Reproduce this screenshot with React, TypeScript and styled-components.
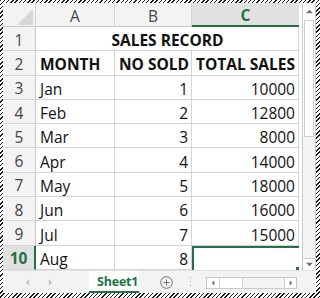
import styled, { createGlobalStyle, css } from 'styled-components';

const GlobalStyle = createGlobalStyle`
	html, body {
		margin: 0;
		padding: 0;
		background: #ffffff;
	}
	* {
		box-sizing: border-box;
	}
`;

const GREEN = '#217346';
const FONT = `'Open Sans', 'Liberation Sans', sans-serif`;

const Frame = styled.div`
	width: 320px;
	height: 298px;
	padding: 3px 4px 5px 3px;
	background: repeating-linear-gradient(135deg, #1a1a1a 0 1px, #ffffff 1px 3px);
	overflow: hidden;
`;

const Window = styled.div`
	width: 313px;
	height: 290px;
	background: #ffffff;
	display: flex;
	flex-direction: column;
	font-family: ${FONT};
`;

const Main = styled.div`
	display: flex;
	height: 267px;
	gap: 3px;
`;

const Sheet = styled.div`
	width: 296px;
	display: grid;
	grid-template-columns: 33px 79px 77px 107px;
	grid-template-rows: 24px repeat(10, 24.3px);
	overflow: hidden;
`;

const Corner = styled.div`
	background: #f3f3f3;
	border-right: 1px solid #d4d4d4;
	border-bottom: 1px solid #c8c8c8;
	svg {
		display: block;
	}
`;

const ColHead = styled.div<{ $active?: boolean }>`
	display: flex;
	align-items: center;
	justify-content: center;
	padding-top: 2px;
	font-size: 15.5px;
	color: #444444;
	background: #f3f3f3;
	border-right: 1px solid #d4d4d4;
	border-bottom: 1px solid #c8c8c8;
	${(p) =>
		p.$active &&
		css`
			background: #e1e1e1;
			color: ${GREEN};
			font-weight: 700;
			border-bottom: 2px solid ${GREEN};
			border-right: none;
		`}
`;

const RowHead = styled.div<{ $active?: boolean }>`
	display: flex;
	align-items: center;
	justify-content: center;
	padding-top: 2px;
	font-size: 15.5px;
	color: #444444;
	background: #f3f3f3;
	border-right: 1px solid #c8c8c8;
	border-bottom: 1px solid #d4d4d4;
	${(p) =>
		p.$active &&
		css`
			background: #e1e1e1;
			color: ${GREEN};
			font-weight: 700;
			border-right: 2px solid ${GREEN};
		`}
`;

const Cell = styled.div<{ $align?: 'left' | 'right' | 'center'; $bold?: boolean; $span?: number; $selected?: boolean }>`
	position: relative;
	display: flex;
	align-items: center;
	justify-content: ${(p) => (p.$align === 'right' ? 'flex-end' : p.$align === 'center' ? 'center' : 'flex-start')};
	padding: 3px 3px 0 4px;
	font-size: 15.5px;
	font-weight: ${(p) => (p.$bold ? 700 : 400)};
	color: #111111;
	white-space: nowrap;
	border-right: 1px solid #d4d4d4;
	border-bottom: 1px solid #d4d4d4;
	grid-column: span ${(p) => p.$span ?? 1};
	${(p) =>
		p.$selected &&
		css`
			box-shadow: inset 2px 2px 0 ${GREEN};
			border-right: none;
			border-bottom: none;
		`}
`;

const FillHandle = styled.span`
	position: absolute;
	right: 0;
	bottom: 0;
	width: 3px;
	height: 3px;
	background: ${GREEN};
`;

const VScroll = styled.div`
	width: 14px;
	display: flex;
	flex-direction: column;
	border-left: 1px solid #c9c9c9;
	border-right: 1px solid #c9c9c9;
	background: #ffffff;
`;

const ScrollBtn = styled.div<{ $h: number; $bottom?: boolean }>`
	display: flex;
	align-items: center;
	justify-content: center;
	flex: 0 0 auto;
	height: ${(p) => p.$h}px;
	background: #ffffff;
	border-top: ${(p) => (p.$bottom ? '1px solid #cfcfcf' : 'none')};
	svg {
		display: block;
	}
`;

const VThumb = styled.div`
	height: 117px;
	margin: 0 1px;
	border: 1px solid #cfcfcf;
	background: #ffffff;
`;

const VTrack = styled.div`
	flex: 1;
	background: #f5f5f5;
`;

const BottomBar = styled.div`
	height: 23px;
	display: flex;
	align-items: stretch;
	background: #f3f3f3;
	border-top: 1px solid #e2e2e2;
`;

const NavArrows = styled.div`
	width: 86px;
	display: flex;
	align-items: center;
	padding-left: 22px;
	gap: 18px;
`;

const Tab = styled.div`
	width: 50px;
	display: flex;
	align-items: center;
	padding-left: 8px;
	background: #ffffff;
	border-bottom: 2px solid ${GREEN};
	font-size: 12.5px;
	font-weight: 700;
	letter-spacing: -0.2px;
	color: ${GREEN};
	white-space: nowrap;
`;

const AddSheet = styled.div`
	width: 45px;
	display: flex;
	align-items: center;
	padding-left: 21px;
	svg {
		display: block;
	}
`;

const Dots = styled.div`
	width: 22px;
	display: flex;
	align-items: center;
	padding-left: 6px;
	svg {
		display: block;
	}
`;

const HScroll = styled.div`
	width: 91px;
	height: 12px;
	align-self: center;
	margin-top: 1px;
	display: flex;
	border: 1px solid #c9c9c9;
	background: #f5f5f5;
`;

const HButton = styled.div<{ $end?: boolean }>`
	width: 12px;
	display: flex;
	align-items: center;
	justify-content: center;
	background: #ffffff;
	border-left: ${(p) => (p.$end ? '1px solid #cfcfcf' : 'none')};
	svg {
		display: block;
	}
`;

const HThumb = styled.div`
	width: 24px;
	background: #ffffff;
	border-left: 1px solid #cfcfcf;
	border-right: 1px solid #cfcfcf;
`;

const HTrack = styled.div`
	flex: 1;
`;

const rows: [string, string, string][] = [
	['Jan', '1', '10000'],
	['Feb', '2', '12800'],
	['Mar', '3', '8000'],
	['Apr', '4', '14000'],
	['May', '5', '18000'],
	['Jun', '6', '16000'],
	['Jul', '7', '15000'],
	['Aug', '8', ''],
];

const Tri = ({ dir, color, size = 6 }: { dir: 'up' | 'down' | 'left' | 'right'; color: string; size?: number }) => {
	const pts = {
		up: '0,5 4,1 8,5',
		down: '0,1 4,5 8,1',
		left: '5,0 1,4 5,8',
		right: '1,0 5,4 1,8',
	}[dir];
	const vertical = dir === 'up' || dir === 'down';
	return (
		<svg width={vertical ? size + 2 : size} height={vertical ? size : size + 2} viewBox={vertical ? '0 0 8 6' : '0 0 6 8'}>
			<polygon points={pts} fill={color} />
		</svg>
	);
};

const App = () => {
	return (
		<>
			<GlobalStyle />
			<Frame>
				<Window>
					<Main>
						<Sheet>
							<Corner>
								<svg width="32" height="23" viewBox="0 0 32 23">
									<polygon points="30,6 30,22 14,22" fill="#d8d8d8" />
								</svg>
							</Corner>
							<ColHead>A</ColHead>
							<ColHead>B</ColHead>
							<ColHead $active>C</ColHead>

							<RowHead>1</RowHead>
							<Cell $span={3} $align="center" $bold>
								SALES RECORD
							</Cell>

							<RowHead>2</RowHead>
							<Cell $bold>MONTH</Cell>
							<Cell $bold>NO SOLD</Cell>
							<Cell $bold>TOTAL SALES</Cell>

							{rows.map(([month, sold, total], i) => {
								const last = i === rows.length - 1;
								return [
									<RowHead key={`h${i}`} $active={last}>
										{i + 3}
									</RowHead>,
									<Cell key={`a${i}`}>{month}</Cell>,
									<Cell key={`b${i}`} $align="right">
										{sold}
									</Cell>,
									<Cell key={`c${i}`} $align="right" $selected={last}>
										{total}
										{last && <FillHandle />}
									</Cell>,
								];
							})}
						</Sheet>
						<VScroll>
							<ScrollBtn $h={17}>
								<Tri dir="up" color="#707070" size={5} />
							</ScrollBtn>
							<VThumb />
							<VTrack />
							<ScrollBtn $h={12} $bottom>
								<Tri dir="down" color="#707070" size={5} />
							</ScrollBtn>
						</VScroll>
					</Main>
					<BottomBar>
						<NavArrows>
							<Tri dir="left" color="#c4c4c4" size={5} />
							<Tri dir="right" color="#c4c4c4" size={5} />
						</NavArrows>
						<Tab>Sheet1</Tab>
						<AddSheet>
							<svg width="13" height="13" viewBox="0 0 13 13">
								<circle cx="6.5" cy="6.5" r="5.8" fill="none" stroke="#6f6f6f" strokeWidth="1" />
								<path d="M6.5 3.5v6M3.5 6.5h6" stroke="#6f6f6f" strokeWidth="1" />
							</svg>
						</AddSheet>
						<Dots>
							<svg width="2" height="10" viewBox="0 0 2 10">
								<rect x="0" y="0" width="1" height="1" fill="#b0b0b0" />
								<rect x="0" y="4" width="1" height="1" fill="#b0b0b0" />
								<rect x="0" y="8" width="1" height="1" fill="#b0b0b0" />
							</svg>
						</Dots>
						<HScroll>
							<HButton>
								<Tri dir="left" color="#707070" size={4} />
							</HButton>
							<HThumb />
							<HTrack />
							<HButton $end>
								<Tri dir="right" color="#707070" size={4} />
							</HButton>
						</HScroll>
					</BottomBar>
				</Window>
			</Frame>
		</>
	);
};

export default App;
